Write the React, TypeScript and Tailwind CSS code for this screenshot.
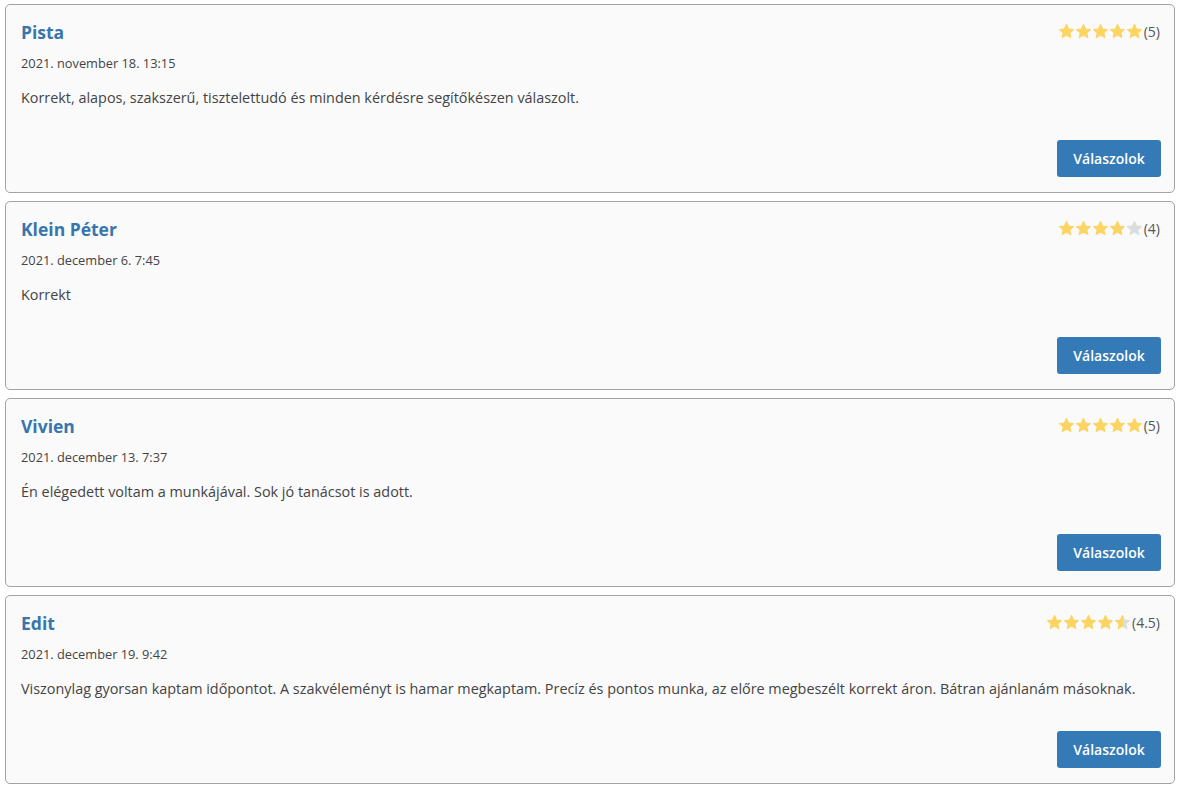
import React from 'react';

interface Review {
  name: string;
  date: string;
  text: string;
  rating: number;
}

const reviews: Review[] = [
  {
    name: 'Pista',
    date: '2021. november 18. 13:15',
    text: 'Korrekt, alapos, szakszerű, tisztelettudó és minden kérdésre segítőkészen válaszolt.',
    rating: 5,
  },
  { name: 'Klein Péter', date: '2021. december 6. 7:45', text: 'Korrekt', rating: 4 },
  {
    name: 'Vivien',
    date: '2021. december 13. 7:37',
    text: 'Én elégedett voltam a munkájával. Sok jó tanácsot is adott.',
    rating: 5,
  },
  {
    name: 'Edit',
    date: '2021. december 19. 9:42',
    text: 'Viszonylag gyorsan kaptam időpontot. A szakvéleményt is hamar megkaptam. Precíz és pontos munka, az előre megbeszélt korrekt áron. Bátran ajánlanám másoknak.',
    rating: 4.5,
  },
];

const STAR = 'M12 2.2l2.9 6.3 6.9.7-5.2 4.6 1.5 6.8L12 17.1l-6.1 3.5 1.5-6.8-5.2-4.6 6.9-.7z';

const Star = ({ fill, id }: { fill: number; id: string }) => (
  <svg width="17" height="17" viewBox="0 0 24 24" className="shrink-0">
    <defs>
      <linearGradient id={id}>
        <stop offset={`${fill * 100}%`} stopColor="#fcd461" />
        <stop offset={`${fill * 100}%`} stopColor="#dcdcdc" />
      </linearGradient>
    </defs>
    <path d={STAR} fill={`url(#${id})`} stroke={`url(#${id})`} strokeWidth="1.6" strokeLinejoin="round" />
  </svg>
);

const Stars = ({ rating, idx }: { rating: number; idx: number }) => (
  <div className="flex items-center">
    {[0, 1, 2, 3, 4].map((i) => (
      <Star key={i} id={`s${idx}-${i}`} fill={Math.max(0, Math.min(1, rating - i))} />
    ))}
    <span className="text-[14px] text-[#555] ml-[1px]">({rating})</span>
  </div>
);

export default function App() {
  return (
    <div
      className="bg-white min-h-screen px-[5px] pt-[4px] flex flex-col gap-[8px]"
      style={{ fontFamily: '"Open Sans", Lato, sans-serif' }}
    >
      {reviews.map((r, idx) => (
        <div
          key={r.name}
          className="bg-[#fafafa] border border-[#a3a3a3] rounded-[5px] pl-[15px] pr-[13px] pt-[16px] pb-[15px] flex flex-col h-[189px]"
        >
          <div className="flex justify-between items-start">
            <h3 className="text-[17.5px] font-bold text-[#3776ad] leading-[22px]">{r.name}</h3>
            <div className="mr-[1px]">
              <Stars rating={r.rating} idx={idx} />
            </div>
          </div>
          <div className="text-[12.8px] text-[#444] mt-[11px] leading-[18px]">{r.date}</div>
          <p className="text-[14.4px] text-[#444] mt-[17px] leading-[18px]">{r.text}</p>
          <div className="mt-auto flex justify-end">
            <button className="bg-[#337ab7] text-white text-[14px] font-semibold rounded-[3px] w-[104px] h-[37px]">
              Válaszolok
            </button>
          </div>
        </div>
      ))}
    </div>
  );
}
